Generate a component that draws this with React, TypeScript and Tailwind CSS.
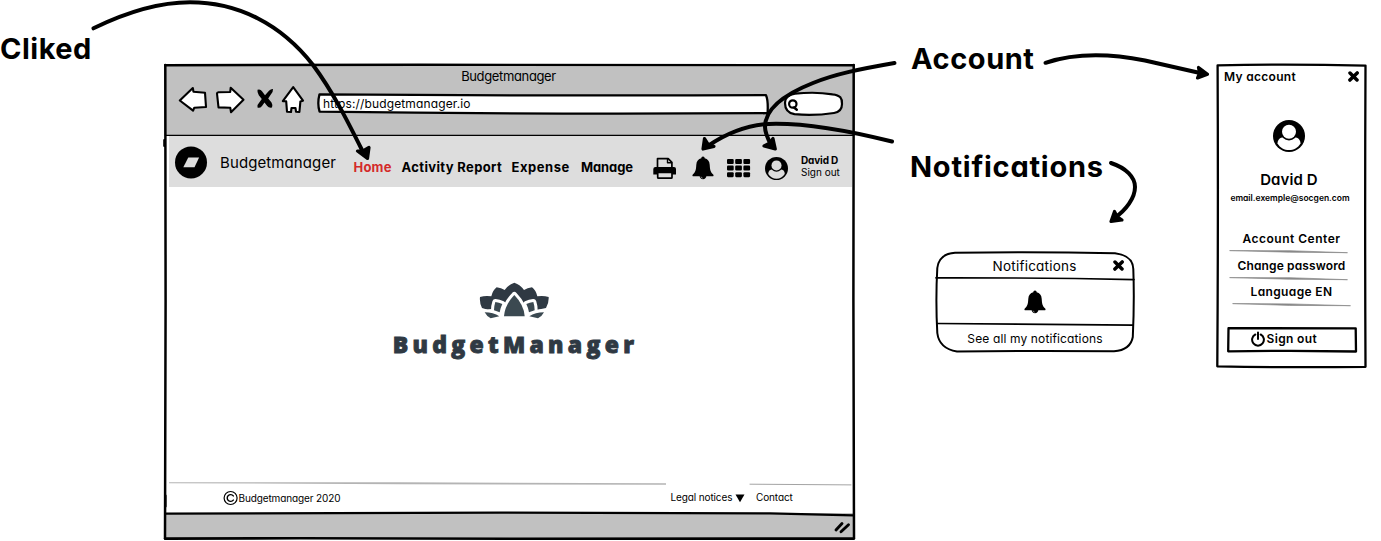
import type { ReactNode } from 'react';

type ArtProps = {
  x: number;
  y: number;
  w: number;
  h: number;
  className?: string;
  children: ReactNode;
};

// A drawing whose inner coordinates are board coordinates.
function Art({ x, y, w, h, className = '', children }: ArtProps) {
  return (
    <svg
      width={w}
      height={h}
      viewBox={`${x} ${y} ${w} ${h}`}
      className={`block shrink-0 overflow-visible ${className}`}
      fill="none"
      stroke="none"
      strokeLinecap="round"
      strokeLinejoin="round"
      aria-hidden="true"
    >
      {children}
    </svg>
  );
}

function Bell({ className = '' }: { className?: string }) {
  return (
    <svg width="22" height="24" viewBox="0 0 22 24" className={`block shrink-0 ${className}`} aria-hidden="true">
      <path
        d="M11 .4c1.100 0 1.700.8 1.700 1.900 3 .8 4.800 3 5 6.500.3 4.500.4 7 3.500 9.600.5.500.5 1.600-.1 1.900H.9c-.6-.3-.6-1.400-.1-1.900 3.100-2.600 3.200-5.100 3.500-9.600C4.500 5.300 6.300 3.100 9.300 2.300 9.300 1.200 9.900.4 11 .4Z"
        fill="#000"
      />
      <path d="M7.600 20h6.800c-.2 1.900-1.500 3.300-3.400 3.300S7.800 21.900 7.600 20Z" fill="#000" />
      <path d="M9.100 20.700q.3 1.200 1.500 1.500" stroke="#bbb" strokeWidth=".7" fill="none" />
    </svg>
  );
}

function Avatar({ size, paper }: { size: number; paper: string }) {
  return (
    <svg width={size} height={size} viewBox="0 0 32 32" className="block shrink-0" aria-hidden="true">
      <circle cx="16" cy="16" r="16" fill="#000" />
      <path d="M4.500 23.500C4.500 19.500 7 17.500 10.500 17.200h11C25 17.500 27.500 19.500 27.500 23.500 24.800 28 20.700 30.100 16 30.100S7.200 28 4.500 23.500Z" fill={paper} />
      <circle cx="16" cy="12" r="8.400" fill="#000" />
      <circle cx="16" cy="11.700" r="7" fill={paper} />
    </svg>
  );
}

function CloseMark() {
  return (
    <svg width="11" height="11" viewBox="0 0 11 11" className="block shrink-0" aria-hidden="true">
      <path d="M2 2 9 9M9.200 1.900 1.900 9.100" stroke="#000" strokeWidth="3.500" strokeLinecap="round" />
    </svg>
  );
}

function Toolbar() {
  return (
    <div className="flex h-[28px] items-center">
      <Art x={179} y={90} w={28} h={28} className="ml-[15px]">
        <path d="M179.800 100.500 192.800 88l.7 3.800 11.500.9 1 14.300-11.700.7-1.200 3Z" fill="#fff" stroke="#000" strokeWidth="2.100" />
      </Art>
      <Art x={216} y={90} w={28} h={28} className="ml-[9px]">
        <path d="M217 93.500q0-1 1.500-1.200l11.700-.3.500-4.300 12.800 12-12.500 12.500-.7-4.400-11.800-.4Z" fill="#fff" stroke="#000" strokeWidth="2.100" />
      </Art>
      <Art x={257} y={90} w={16} h={28} className="ml-[13px]">
        <path
          d="M257.500 89.800q3-.9 4.500 1.500l3 4 4-4.500q2-2 4-1.700.4 3-2.500 6l-2.300 3.500 3.300 4q1.500 2.500.5 5-3 .7-4.800-1.600l-2.700-3.500-2.500 3.500q-2 2.500-4.500 1.600-.5-3 1.800-5l2.500-3.500-3-3.900q-1.800-2.700-1.300-5.400Z"
          fill="#000"
        />
      </Art>
      <Art x={282} y={90} w={22} h={28} className="ml-[9px]">
        <path d="M293.200 87.200 303 100.700l-2.600.7-1 10.600-3.400-.3-.5-3.700h-4l-.5 4-4-.3-.8-10.400-3.400-.2Z" fill="#fff" stroke="#000" strokeWidth="2.100" />
      </Art>
      <div className="relative ml-[12px] flex h-[22px] w-[453px] items-center">
        <Art x={316} y={93} w={453} h={22} className="absolute inset-0">
          <path d="M319.500 94.300Q542 96 766 95.200q2.300 5 1.600 18-224 1.500-448-1.500-2.500-8-.1-17.400Z" fill="#fff" stroke="#000" strokeWidth="2.300" />
        </Art>
        <span className="relative pl-[7px] text-[12px] tracking-[0.130px]">https://budgetmanager.io</span>
      </div>
      <Art x={784} y={90} w={60} h={28} className="ml-[15px]">
        <path
          d="M785 103c0-6 4-8.500 10-9.300q20-2.200 37.500.6c8 .8 9.700 4 9.500 9.700 0 5-2 8-8 9q-20 3-39.500 1.200c-6-1-9.500-5-9.500-11.200Z"
          fill="#fff"
          stroke="#000"
          strokeWidth="2.200"
        />
        <circle cx="792.800" cy="104" r="3.700" stroke="#000" strokeWidth="2.200" />
        <path d="m794 107.500 2.800 2.300" stroke="#000" strokeWidth="2.400" />
      </Art>
    </div>
  );
}

function NavBar() {
  return (
    <nav className="ml-[5px] flex h-[51px] w-[683px] items-center bg-[#dddddd]">
      <Art x={175} y={147} w={32} h={32} className="ml-[6px]">
        <circle cx="191" cy="163.400" r="16" fill="#000" />
        <path d="M188.300 158.500h10.800l-4.600 9.800h-11.200Z" fill="#ddd" />
      </Art>
      <span className="ml-[13px] w-[133.500px] pt-[4px] text-[15px] tracking-[0.100px]">Budgetmanager</span>
      <div className="flex pt-[13px] text-[13px] font-bold">
        <a className="w-[48px] tracking-[0.200px] text-[#d42a2a]">Home</a>
        <a className="w-[110px] tracking-[0.360px]">Activity Report</a>
        <a className="w-[69.500px] tracking-[0.550px]">Expense</a>
        <a className="w-[72px] tracking-[-0.100px]">Manage</a>
      </div>
      <Art x={653} y={157} w={24} h={23} className="mt-[13px]">
        <path d="M657.500 168v-9.300h10.700l3.700 3.600v5.700Z" fill="#ddd" stroke="#000" strokeWidth="1.700" />
        <path d="M667.500 159v3.700h4" stroke="#000" strokeWidth="1.400" />
        <path d="M655.500 167h18.500q2 0 2 2v5.500h-22.700V169q0-2 2.200-2Z" fill="#000" />
        <rect x="657.700" y="172.500" width="14.300" height="5.700" rx=".8" fill="#ddd" stroke="#000" strokeWidth="1.700" />
      </Art>
      <Bell className="mt-[12px] ml-[15px]" />
      <Art x={727} y={159} w={24} h={19} className="mt-[13px] ml-[13px]">
        {[159, 165.600, 172.200].map((y) =>
          [727, 735.200, 743.400].map((x) => <rect key={`${x}-${y}`} x={x} y={y} width="6.700" height="5" rx="1.100" fill="#000" />),
        )}
      </Art>
      <div className="mt-[14px] ml-[14px]">
        <Avatar size={23} paper="#ddd" />
      </div>
      <div className="mt-[9px] ml-[13px] flex flex-col text-[10px] leading-[12px]">
        <span className="font-bold tracking-[-0.150px]">David D</span>
        <span className="tracking-[0px]">Sign out</span>
      </div>
    </nav>
  );
}

function BrandLogo() {
  return (
    <div className="flex flex-col items-center">
      <svg width="70" height="37" viewBox="282 35 210 111" className="block" aria-hidden="true">
        <path
          d="M285 80q16-5 34-2 4-18 16-27 14 2 24 8 11-16 29-22 18 6 29 22 10-6 24-8 12 9 16 27 18-3 34 2 1 18-8 33l-25 5q-75-20-150 0l-17-5q-8-15-6-33Z"
          fill="#2f3943"
        />
        <g stroke="#fff" strokeWidth="18" strokeLinejoin="round">
          <path d="M331 95q11 1 21 6-6 12-8 25l-17-6q0-13 4-25ZM445 95q-11 1-21 6 6 12 8 25l17-6q0-13-4-25Z" />
          <path d="M299 126q26 0 44 12l-26 6q-12-6-18-18ZM477 126q-26 0-44 12l26 6q12-6 18-18Z" />
          <path d="M388 74q-29 30-31 64h62q-2-34-31-64Z" />
        </g>
        <g fill="#3b4951">
          <path d="M331 95q11 1 21 6-6 12-8 25l-17-6q0-13 4-25ZM445 95q-11 1-21 6 6 12 8 25l17-6q0-13-4-25Z" />
          <path d="M299 126q26 0 44 12l-26 6q-12-6-18-18ZM477 126q-26 0-44 12l26 6q12-6 18-18Z" />
          <path d="M388 74q-29 30-31 64h62q-2-34-31-64Z" />
        </g>
      </svg>
      <span className="mt-[12px] pl-[4px] font-['Open_Sans',sans-serif] text-[23px] leading-[26px] font-extrabold tracking-[4.300px] text-[#2f3943] [-webkit-text-stroke:0.9px_#2f3943]">
        BudgetManager
      </span>
    </div>
  );
}

function BrowserWindow() {
  return (
    <section className="relative mt-[64px] flex h-[477px] w-[691px] shrink-0 flex-col">
      <header className="h-[72px] bg-[#c1c1c1]">
        <div className="flex h-[26px] items-center justify-center pr-[2px] text-[13px] tracking-[-0.360px]">Budgetmanager</div>
        <Toolbar />
      </header>
      <NavBar />
      <main className="flex h-[296px] justify-center pt-[95px] pl-[8px]">
        <BrandLogo />
      </main>
      <footer className="flex h-[30px] items-center text-[10px]">
        <Art x={223} y={491} w={15} h={15} className="ml-[59px]">
          <circle cx="230.600" cy="498" r="6.500" stroke="#000" strokeWidth="1.200" />
          <path d="M233.300 495.900a3.400 3.400 0 1 0 0 4.200" stroke="#000" strokeWidth="1.400" />
        </Art>
        <span className="w-[432.500px] pl-[0.500px] tracking-[-0.120px]">Budgetmanager 2020</span>
        <span className="w-[64.500px] pb-[1px] tracking-[-0.120px]">Legal notices</span>
        <Art x={735} y={493} w={10} h={9}>
          <path d="M735.500 493.500h9L740 501.300Z" fill="#000" />
        </Art>
        <span className="ml-[11px] pb-[1px] tracking-[-0.120px]">Contact</span>
      </footer>
      <div className="h-[26px] bg-[#c1c1c1]" />
      <Art x={164} y={64} w={691} h={477} className="pointer-events-none absolute inset-0">
        <path d="M165.200 65.200 420 64.800 853.700 65.200" stroke="#000" strokeWidth="2.400" />
        <path d="M165.300 65 165.600 300 165 538.500" stroke="#000" strokeWidth="2.500" />
        <path d="M853.700 65 853.400 300 854 538" stroke="#000" strokeWidth="2.500" />
        <path d="M165 538.600 300 538.200 520 538.800 854 538.600" stroke="#000" strokeWidth="2.600" />
        <path d="M166 135.400H853" stroke="#000" strokeWidth="1.200" />
        <path d="M166 513.600 500 512.600 770 513.300 853.500 515.400" stroke="#000" strokeWidth="2.300" />
        <path d="M164.300 140v6M165.500 495.500v11" stroke="#000" strokeWidth="2.200" />
        <path d="M169 482.300 400 482.300 666 483.200 666 484.700 400 484.300 169 483.200Z" fill="#b4b4b4" />
        <path d="M750 484.200 851 484.900" stroke="#999" strokeWidth=".9" />
        <path d="m836 530 6-6.500M841 531.800l7.500-7" stroke="#000" strokeWidth="2.900" />
      </Art>
    </section>
  );
}

function NotificationsPopup() {
  return (
    <section className="relative mt-[36px] ml-[81px] flex h-[100px] w-[199px] flex-col">
      <Art x={936} y={252} w={199} h={100} className="absolute inset-0">
        <path
          d="M955 252.800Q1035 251.500 1115 253.300C1128 255 1133 260 1133.300 269Q1134.500 300 1132.800 337C1131 347 1124 350.500 1114 351.300Q1035 350.500 957 351.500C945 349.500 938.500 343 937.300 333Q935.500 300 937.300 268C938.500 258 945 253.500 955 252.800Z"
          stroke="#000"
          strokeWidth="2"
        />
        <path d="M936 277.800Q1035 277.600 1134 279.600M937 323.500Q1035 324.600 1133 325.200" stroke="#000" strokeWidth="1.700" />
      </Art>
      <header className="relative flex h-[27px] items-center">
        <span className="w-[125.500px] pt-[2px] pl-[56.500px] text-[13.500px] whitespace-nowrap tracking-[0.240px]">Notifications</span>
        <div className="ml-[51.500px]">
          <CloseMark />
        </div>
      </header>
      <div className="relative flex h-[46px] items-center justify-center pr-[2px]">
        <Bell />
      </div>
      <a className="relative flex h-[27px] items-center justify-center pr-[1px] text-[12px] tracking-[0.130px]">See all my notifications</a>
    </section>
  );
}

function AccountPanel() {
  return (
    <section className="relative mt-[64px] flex h-[304px] w-[150px] shrink-0 flex-col items-center">
      <Art x={1217} y={64} w={150} h={304} className="absolute inset-0">
        <path d="M1217.600 65.300Q1290 63.900 1365.500 65.600 1364.800 216 1365.500 366.800 1290 367.800 1217.300 366.300 1218.300 216 1217.600 65.300Z" stroke="#000" strokeWidth="2.300" />
        <g fill="#888" stroke="#888" strokeWidth=".7">
          <path d="M1230 250.600 1290 250.700 1347.500 252.700 1290 252.200Z" />
          <path d="M1230 277.600 1290 277.700 1347.500 279.700 1290 279.200Z" />
          <path d="M1233 303.600 1290 303.900 1350.500 305.700 1290 305.400Z" />
        </g>
        <path d="M1228.500 328.200 1355.700 328.300 1356 351.500 1290 350.800 1228.200 351.300Z" stroke="#000" strokeWidth="2.300" />
      </Art>
      <header className="relative flex h-[25px] w-full items-center justify-between pr-[8px] pl-[7px] text-[12px] font-semibold tracking-[0.300px]">
        My account
        <CloseMark />
      </header>
      <div className="relative mt-[31px] -ml-[6px]">
        <Avatar size={32} paper="#fff" />
      </div>
      <span className="relative mt-[18px] -ml-[6px] text-[15px] leading-[20px] font-semibold tracking-[0.100px]">David D</span>
      <span className="relative mt-[3px] -ml-[4px] text-[8.500px] leading-[10px] font-semibold">email.exemple@socgen.com</span>
      <div className="relative mt-[23px] -ml-[1px] flex flex-col items-center text-[12px] leading-[26.500px] font-semibold">
        <a className="tracking-[0.500px]">Account Center</a>
        <a className="tracking-[0.130px]">Change password</a>
        <a className="tracking-[0.360px]">Language EN</a>
      </div>
      <button className="relative mt-[22px] flex h-[23px] w-[128px] items-center pl-[23px] text-[12px] font-semibold tracking-[0.350px]">
        <svg width="14" height="16" viewBox="0 0 14 16" className="mr-[1.500px] block shrink-0" fill="none" stroke="#000" strokeWidth="2" strokeLinecap="round" aria-hidden="true">
          <path d="M4.300 3.500a5.900 5.900 0 1 0 5.400 0M7 1.500v6.500" />
        </svg>
        Sign out
      </button>
    </section>
  );
}

function Arrows() {
  return (
    <Art x={0} y={0} w={1381} h={541} className="pointer-events-none absolute inset-0">
      <g stroke="#000" strokeWidth="4">
        <path d="M93.500 28.300C127 12 160 2.300 190 2.300 238 2.300 281 24 313 65 333 92 347 120 363 152" />
        <path d="M894.500 63C860 69 835 74 813 83 780 96 765 110 765 127 765 133 768 139 771 145" />
        <path d="M892 141.500C850 131 810 123.700 776 123.700 748 123.700 727 133 708 146" />
        <path d="M1045.500 62.800C1075 53 1110 53.500 1145 60.500L1200 73" />
        <path d="M1111 163C1126 168 1135 177 1135 187 1135 198 1126 210 1114.500 218" />
      </g>
      <g fill="#000" stroke="#000" strokeWidth="3.200">
        <path d="M367.500 158.500 357.500 151 363 151 369 147.500Z" />
        <path d="M775.300 149 764 146 769 143.500 773 138.500Z" />
        <path d="M703 149 704.500 138.500 708 144 714 146.500Z" />
        <path d="M1207.500 74.300 1198.500 67.500 1199.500 73 1197.500 78Z" />
        <path d="M1111 221.500 1114.500 211.500 1117 216.500 1122 220Z" />
      </g>
    </Art>
  );
}

export default function App() {
  return (
    <div className="relative flex h-[541px] w-[1381px] overflow-hidden bg-white font-['Inter','Liberation_Sans',sans-serif] whitespace-nowrap text-black [font-feature-settings:'cv11']">
      <div className="w-[164px] shrink-0">
        <h2 className="flex h-[97px] items-center text-[29px] font-bold tracking-[0.500px]">Cliked</h2>
      </div>
      <BrowserWindow />
      <div className="w-[362px] shrink-0">
        <h2 className="flex h-[117px] items-center pl-[56px] text-[29px] font-bold tracking-[0.560px]">Account</h2>
        <h2 className="flex h-[99px] items-center pl-[55px] text-[29px] font-bold tracking-[0.760px]">Notifications</h2>
        <NotificationsPopup />
      </div>
      <AccountPanel />
      <Arrows />
    </div>
  );
}
